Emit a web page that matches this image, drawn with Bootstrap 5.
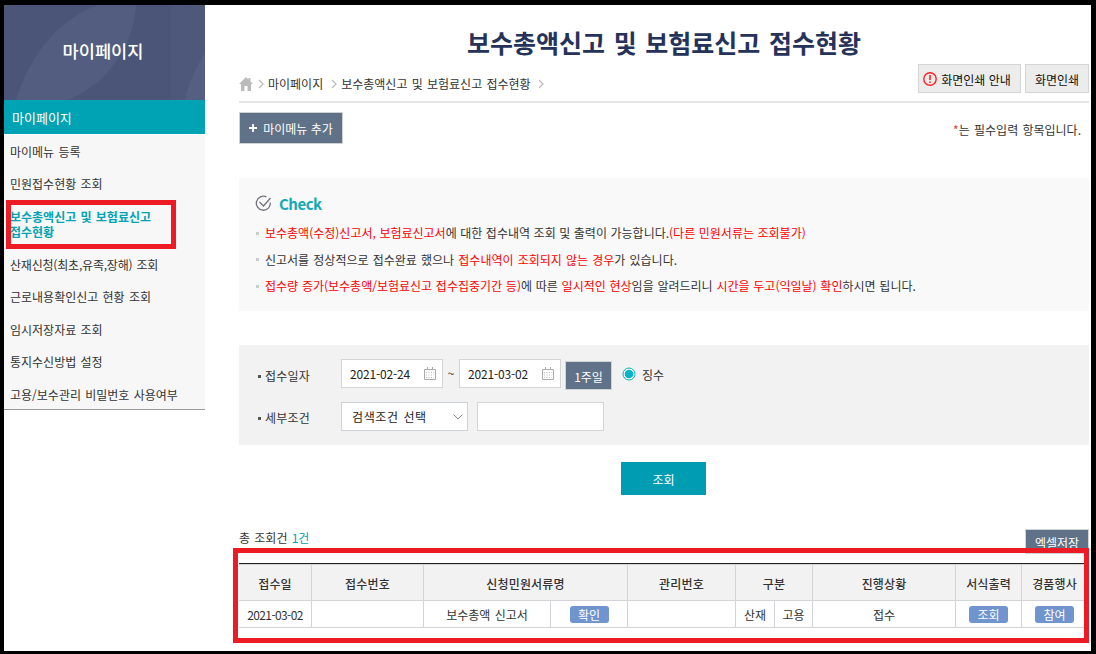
<!DOCTYPE html>
<html lang="ko">
<head>
<meta charset="utf-8">
<title>보수총액신고 및 보험료신고 접수현황</title>
<link href="https://cdn.jsdelivr.net/npm/bootstrap@5.3.0/dist/css/bootstrap.min.css" rel="stylesheet">
<style>
*{border-radius:0}
body{font-family:"Noto Sans CJK KR",sans-serif;font-size:12px;line-height:16px;word-spacing:.9px;color:#333;background:#000;width:1096px;height:654px;overflow:hidden}
.frame{height:654px;border:solid #000;border-width:5px 5px 3px 4px;background:#fff}
.side{width:201px}
.side-head{height:95px;background:#4a5578;color:#fff;font-size:17.600px;font-weight:500;position:relative;padding:0 3px 3px 0}
.side-head svg{position:absolute;left:0;top:0}
.side-head span{position:relative}
.side-title{height:34px;background:#00a3b4;color:#fff;font-size:13px;padding:2px 8px 0}
.side-menu{height:276px;background:#f7f7f7;border-top:1px solid #fff;border-bottom:1px solid #999}
.side-menu li{height:32.4px;padding:1px 0 0 6px;white-space:nowrap}
.side-menu li.on{height:48.6px;position:relative;color:#00a3b4;font-weight:700;line-height:15px;padding-top:0}
.side-menu li.on::after{content:"";position:absolute;left:2px;top:0;width:170px;height:49px;border:5px solid #ed1c24}
.main{width:850px;margin-left:34px}
h1{font-size:25px;line-height:30px;font-weight:700;color:#25335a;height:59px;padding:22px 0 0;margin:0;text-align:center;word-spacing:1.600px;white-space:nowrap}
.crumbs{height:39px;border-bottom:2px solid #e5e5e5;white-space:nowrap}
.crumb-trail{height:30px;padding-top:10px}
.pbtn{height:29px;background:#ececec;border:1px solid #d5d5d5;color:#111;padding:3px 0 0;display:flex;align-items:center;justify-content:center;font-size:12px;line-height:16px}
.dbtn{background:#607287;border:1px solid #d0d3d6;color:#fff;display:flex;align-items:center;justify-content:center;font-size:12px;line-height:16px;padding:2px 0 0}
.tools{height:75px;padding-top:11px}
.notice{height:133px;background:#f9f9f9;padding:16px 16px 0}
.notice h2{font-size:15px;line-height:20px;font-weight:600;letter-spacing:-.5px;color:#14a9b7;margin:0}
.notice ul{padding-top:6px}
.notice li{height:26.5px;display:flex;align-items:center;white-space:pre;word-spacing:.2px}
.notice li:nth-child(2){word-spacing:.8px}
.notice li:nth-child(3){word-spacing:.4px}
.notice li::before{content:"";width:3px;height:3px;background:#ccc;margin:0 6px 0 1px}
.notice b{font-weight:400;color:#f00}
.search{height:100px;background:#f2f2f2;margin-top:34px;padding:12px 0 0 19px}
.lbl{width:83px;padding-top:6px;font-size:12px;letter-spacing:.2px}
.lbl::before{content:"";display:inline-block;width:3px;height:3px;background:#555;margin:0 4px 3px 0}
.field{height:29px;background:#fff;border:1px solid #d5d5d5;padding:2px 6px 0 8px;color:#222;font-size:12px;letter-spacing:-.15px}
.go{width:85px;height:33px;background:#009cb2;color:#fff;margin:17px 0 0 382px;padding-top:3px}
.total{height:54px;padding-top:34px}
.result{border:5px solid #ed1c24;margin:-1px 0 0 -6px;height:95px;width:856px;position:relative;padding:10px 0 0 1px;overflow:hidden}
.result table{table-layout:fixed;width:849px;margin:0;border-collapse:separate;border-spacing:0;border-top:1px solid #222;text-align:center;font-size:12px;line-height:16px}
.result th,.result td{border-right:1px solid #d2d2d7;border-bottom:1px solid #d2d2d7;padding:2px 0 0;vertical-align:middle;white-space:nowrap;color:#333}
.result th{height:37px;background:#f2f2f2;font-weight:500;border-top:1px solid #d2d2d7;letter-spacing:.15px}
.result td{height:27px;padding-top:1px}
.result td:first-child{letter-spacing:-.6px}
.tag{display:block;width:39px;height:17px;border-radius:3px;background:#7094ce;color:#fff;margin:0 auto;line-height:17px}
</style>
</head>
<body>
<div class="frame d-flex">
 <aside class="side flex-shrink-0">
  <div class="side-head d-flex align-items-center justify-content-center">
   <svg width="201" height="95" viewBox="0 0 201 95"><path d="M132 0C130 42 101 80 64 95H12C26 49 55 14 94 0Z" fill="#535d80"/><path d="M167 0h34v95h-34z" fill="#4d587b"/><path d="M201 48C192 62 185 77 181 95h20Z" fill="#555f82"/></svg>
   <span>마이페이지</span>
  </div>
  <div class="side-title d-flex align-items-center">마이페이지</div>
  <ul class="side-menu list-unstyled m-0">
   <li class="d-flex align-items-center">마이메뉴 등록</li>
   <li class="d-flex align-items-center">민원접수현황 조회</li>
   <li class="on d-flex align-items-center"><span>보수총액신고 및 보험료신고<br>접수현황</span></li>
   <li class="d-flex align-items-center" style="letter-spacing:-.2px">산재신청(최초,유족,장해) 조회</li>
   <li class="d-flex align-items-center">근로내용확인신고 현황 조회</li>
   <li class="d-flex align-items-center">임시저장자료 조회</li>
   <li class="d-flex align-items-center">통지수신방법 설정</li>
   <li class="d-flex align-items-center">고용/보수관리 비밀번호 사용여부</li>
  </ul>
 </aside>
 <main class="main flex-shrink-0">
  <h1>보수총액신고 및 보험료신고 접수현황</h1>
  <div class="crumbs d-flex justify-content-between">
   <div class="crumb-trail d-flex align-items-center">
    <svg width="14" height="14" viewBox="0 0 14 14"><path d="M7 0 0 7h2v7h3.500V9h3v5H12V7h2L11.500 4.500V1h-2v1.500Z" fill="#bbb"/></svg>
    <svg class="mx-1" width="7" height="10" viewBox="0 0 7 10" fill="none" stroke="#bbb" stroke-width="1.300"><path d="m2 1 4 4-4 4"/></svg>
    <span>마이페이지</span>
    <svg class="ms-2" style="margin-right:3px" width="7" height="10" viewBox="0 0 7 10" fill="none" stroke="#bbb" stroke-width="1.300"><path d="m1 1 4 4-4 4"/></svg>
    <span>보수총액신고 및 보험료신고 접수현황</span>
    <svg class="ms-2" width="7" height="10" viewBox="0 0 7 10" fill="none" stroke="#bbb" stroke-width="1.300"><path d="m0 1 4 4-4 4"/></svg>
   </div>
   <div class="d-flex gap-1">
    <button class="pbtn" style="width:103px;padding-right:5px"><svg width="14" height="14" viewBox="0 0 14 14" style="margin:-3px 4px 0 0"><circle cx="7" cy="7" r="6.200" fill="none" stroke="#f22" stroke-width="1.400"/><path d="M7 3v5M7 9.500V11" stroke="#f22" stroke-width="1.600"/></svg>화면인쇄 안내</button>
    <button class="pbtn" style="width:64px">화면인쇄</button>
   </div>
  </div>
  <div class="tools d-flex justify-content-between">
   <button class="dbtn" style="width:104px;height:32px;margin-top:-2px"><svg style="margin:-3px 6px 0 0" width="8" height="8" viewBox="0 0 8 8"><path d="M4 0v8M0 4h8" stroke="#fff" stroke-width="1.800"/></svg>마이메뉴 추가</button>
   <span class="pe-2" style="padding-top:8px"><span style="color:#e33">*</span>는 필수입력 항목입니다.</span>
  </div>
  <section class="notice">
   <h2 class="d-flex align-items-center"><svg style="margin:-1px 7px 0 0" width="17" height="17" viewBox="0 0 17 17" fill="none" stroke="#707080" stroke-width="1.300"><path d="M11.500 2A7 7 0 1 0 15.300 7.500M4.500 7l4 4L15.500 3"/></svg>Check</h2>
   <ul class="list-unstyled m-0">
    <li><b>보수총액(수정)신고서, 보험료신고서</b>에 대한 접수내역 조회 및 출력이 가능합니다.<b>(다른 민원서류는 조회불가)</b></li>
    <li>신고서를 정상적으로 접수완료 했으나 <b>접수내역이 조회되지 않는 경우</b>가 있습니다.</li>
    <li><b>접수량 증가(보수총액/보험료신고 접수집중기간 등)</b>에 따른 <b>일시적인 현상</b>임을 알려드리니 <b>시간을 두고(익일날) 확인</b>하시면 됩니다.</li>
   </ul>
  </section>
  <section class="search">
   <div class="d-flex align-items-center">
    <div class="lbl">접수일자</div>
    <div class="field d-flex align-items-center justify-content-between" style="width:102px">2021-02-24<svg width="12" height="13" viewBox="0 0 12 13" style="margin-top:-2px"><path d="M.5 2.500h11v10H.5zM3.500 0v3M8.500 0v3" fill="none" stroke="#aaa"/><path d="M2 5.500h8M2 8h8M2 10.500h8" stroke="#bbb" stroke-dasharray="1 1.500"/></svg></div>
    <span style="width:16px;text-align:center">~</span>
    <div class="field d-flex align-items-center justify-content-between" style="width:102px">2021-03-02<svg width="12" height="13" viewBox="0 0 12 13" style="margin-top:-2px"><path d="M.5 2.500h11v10H.5zM3.500 0v3M8.500 0v3" fill="none" stroke="#aaa"/><path d="M2 5.500h8M2 8h8M2 10.500h8" stroke="#bbb" stroke-dasharray="1 1.500"/></svg></div>
    <button class="dbtn" style="width:47px;height:29px;margin:4px 10px -1px 4px">1주일</button>
    <svg width="14" height="14" viewBox="0 0 14 14" style="margin-top:1px"><circle cx="7" cy="7" r="6" fill="#fff" stroke="#00b3ca"/><circle cx="7" cy="7" r="4.300" fill="#00b3ca"/></svg>
    <span style="margin:3px 0 0 6px">징수</span>
   </div>
   <div class="d-flex align-items-center" style="margin-top:13px">
    <div class="lbl" style="padding-top:2px">세부조건</div>
    <div class="field d-flex align-items-center justify-content-between" style="width:127px;padding:1px 4px 0 10px;border-color:#cdd3d8;letter-spacing:.6px">검색조건 선택<svg width="10" height="6" viewBox="0 0 10 6" fill="none" stroke="#888"><path d="m.5.5 4.500 4.500L9.500.5"/></svg></div>
    <div class="field" style="width:127px;margin-left:9px"></div>
   </div>
  </section>
  <button class="go border-0 d-flex align-items-center justify-content-center">조회</button>
  <div class="total d-flex justify-content-between">
   <span style="padding-top:1px">총 조회건 <span style="color:#00a3b4">1건</span></span>
   <button class="dbtn" style="width:64px;height:25px">엑셀저장</button>
  </div>
  <div class="result">
   <table>
    <colgroup><col style="width:73px"><col style="width:112px"><col style="width:127px"><col style="width:77px"><col style="width:108px"><col style="width:39px"><col style="width:38px"><col style="width:143px"><col style="width:66px"><col style="width:66px"></colgroup>
    <tr><th>접수일</th><th>접수번호</th><th colspan="2">신청민원서류명</th><th>관리번호</th><th colspan="2">구분</th><th>진행상황</th><th>서식출력</th><th>경품행사</th></tr>
    <tr><td>2021-03-02</td><td></td><td>보수총액 신고서</td><td><span class="tag">확인</span></td><td></td><td>산재</td><td>고용</td><td>접수</td><td><span class="tag">조회</span></td><td><span class="tag">참여</span></td></tr>
   </table>
  </div>
 </main>
</div>
<script src="https://cdn.jsdelivr.net/npm/bootstrap@5.3.0/dist/js/bootstrap.bundle.min.js"></script>
</body>
</html>
